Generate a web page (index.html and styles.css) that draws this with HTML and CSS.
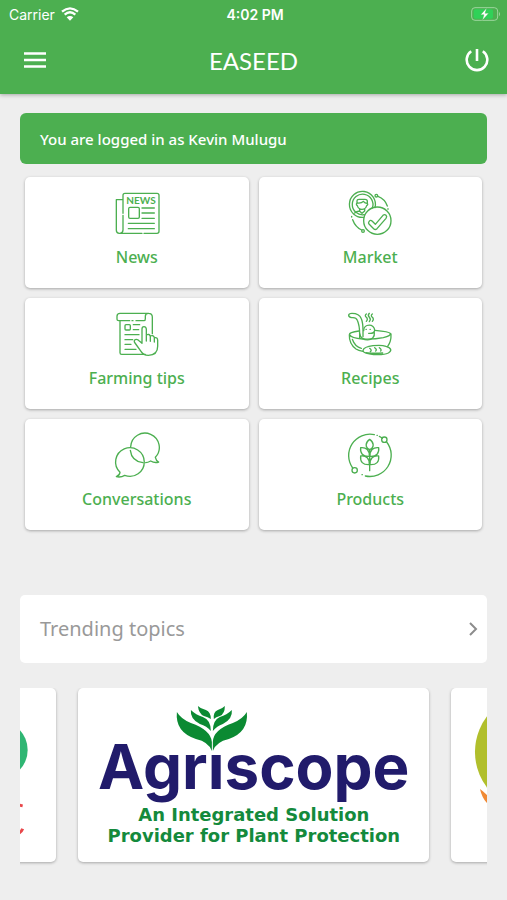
FILE: index.html
```html
<!DOCTYPE html>
<html lang="en">
<head>
<meta charset="utf-8">
<meta name="viewport" content="width=device-width, initial-scale=1">
<title>EASEED</title>
<link rel="stylesheet" href="styles.css">
</head>
<body>
<header class="header">
  <div class="status">
    <div class="carrier">
      <span>Carrier</span>
      <svg class="wifi" viewBox="0 0 54 42" aria-hidden="true"><path d="M3 14Q27-6 51 14M11 23Q27 9 43 23" fill="none" stroke="#fff" stroke-width="7"/><path d="M17 31Q27 23 37 31L27 41Z" fill="#fff"/></svg>
    </div>
    <span class="clock">4:02 PM</span>
    <svg class="battery" viewBox="0 0 90 42" aria-hidden="true"><rect x="2" y="2" width="78" height="38" rx="10" fill="none" stroke="#9cd59e" stroke-width="3"/><path d="M84 14q6 7 0 14z" fill="#9cd59e"/><rect x="8" y="7" width="58" height="28" rx="5" fill="#30d158"/><path d="M47 3 29 23H39L34 40 53 19H42Z" fill="#fff" stroke="#4caf50" stroke-width="1"/></svg>
  </div>
  <nav class="nav">
    <button class="icon-button menu" type="button" aria-label="Menu"><svg viewBox="0 0 24 24"><path d="M1 4.500h22M1 11h22M1 17.500h22" fill="none" stroke="#fff" stroke-width="2.600"/></svg></button>
    <h1 class="title">EASEED</h1>
    <button class="icon-button power" type="button" aria-label="Log out"><svg viewBox="0 0 24 24"><path d="M12 0v12M6.200 2.300A10.300 10.300 0 1 0 17.800 2.300" fill="none" stroke="#fff" stroke-width="2.600"/></svg></button>
  </nav>
</header>

<main class="main">
  <p class="banner">You are logged in as Kevin Mulugu</p>

  <div class="tiles">
    <a class="tile" href="#news">
      <svg class="tile-icon" viewBox="39 30 144 144" aria-hidden="true"><path d="M69 100V46q0-6 6-6H171q6 0 6 6V154q0 6-6 6H132M126 160H58q-9 0-9-9V59H67M69 106V150q0 9-9 10"/><rect x="86" y="82" width="32" height="33" rx="4"/><path d="M126 84H163M126 99H163M126 115H163M85 130H163M85 146H163"/><text class="icon-text" x="123" y="72">NEWS</text></svg>
      <span>News</span>
    </a>
    <a class="tile" href="#market">
      <svg class="tile-icon" viewBox="36 30 144 144" aria-hidden="true"><path d="M89 112A39 39 0 1 1 123 83M91 104A31 31 0 1 1 115 84"/><path d="M69 69V62q0-4 6-4H93q7 0 7 6v7M69 69q-4 5 1 8 3 11 14 11t14-11q5-3 2-7M71 69q12 1 17-5 5 6 11 6M77 86v7q-10 1-15 6M84 100l-7-6M84 100l8-7v-7"/><circle cx="130" cy="122" r="41"/><path d="M105 125q4-7 10-1l9 9 23-27q5-4 9 0t0 9l-27 31q-5 5-10 0l-14-14q-3-3 0-7z"/><circle cx="127" cy="47" r="4"/><path d="M132 49q21 8 28 29M162 86v2M53 109v2M56 119q8 22 27 31"/><circle cx="87" cy="153" r="4"/></svg>
      <span>Market</span>
    </a>
    <a class="tile" href="#farming-tips">
      <svg class="tile-icon" viewBox="39 33 144 144" aria-hidden="true"><path d="M146 40H60q-9 0-9 9v9q0 4 5 4H89M96 62h3M108 62H132q4 0 4-6V49q0-9 9-9 12 0 12 11v50M60 63V158q0 5 5 5H136"/><rect x="75" y="74" width="16" height="16" rx="3"/><path d="M100 74H119M100 89H116M75 104H117M75 119H98M75 133H93M75 148H108"/><path d="M126 128V87q0-7 6-7t7 7v36M139 105q9-5 12 4v15M151 108q8-4 12 4v14M163 113q10-2 10 8v18q0 27-28 27-15 0-22-12l-18-25q-5-7 1-10t13 5l7 6"/></svg>
      <span>Farming tips</span>
    </a>
    <a class="tile" href="#recipes">
      <svg class="tile-icon" viewBox="36 33 144 144" aria-hidden="true"><path d="M87 110V92Q87 68 82 56 76 40 54 40q-10 0-10 6t9 7q13-2 17 8 7 16 7 42v10M97 42q-6 5 0 10t0 12M106 40q-6 6 0 12t0 13M115 42q-6 5 0 10t0 12"/><path d="M89 92C89 70 122 70 122 91 121 99 114 101 104 100M96 88h1M108 88h1M121 98C125 126 79 126 77 101"/><path d="M75 93q-31 4-28 11 4 10 39 13 31 2 62-4 24-6 21-13-3-5-46-9M46 104q-1 27 20 43 7 5 21 7M171 102q1 23-10 37M55 118q8 23 27 27"/><path d="M87 151C91 136 140 133 156 139 173 144 174 153 163 159 147 167 86 166 87 151ZM107 145q8 6 2 10M122 143q8 6 3 10M136 143q8 6 4 10M96 158q20 3 50 1"/></svg>
      <span>Recipes</span>
    </a>
    <a class="tile" href="#conversations">
      <svg class="tile-icon" viewBox="39 21 144 144" aria-hidden="true"><path d="M60 142A43 43 0 1 1 74 151Q63 158 49 155 59 151 60 142Z"/><path d="M92 65A43 43 0 1 1 166 97Q168 107 176 111 164 115 152 108 143 113 137 113M129 113Q95 109 91 76"/></svg>
      <span>Conversations</span>
    </a>
    <a class="tile" href="#products">
      <svg class="tile-icon" viewBox="36 21 144 144" aria-hidden="true"><path d="M56 129A64 64 0 0 1 121 29M129 31h1M136 34Q141 36 145 40M158 51A64 64 0 0 1 94 153M84 149h1"/><circle cx="151" cy="44" r="8"/><circle cx="62" cy="136" r="8"/><path d="M107 137V76M107 74C92 67 94 52 107 43 120 52 122 67 107 74ZM106 94C86 95 78 85 80 68 97 66 107 76 106 94ZM108 94C128 95 136 85 134 68 117 66 107 76 108 94ZM106 119C86 120 78 110 80 93 97 91 107 101 106 119ZM108 119C128 120 136 110 134 93 117 91 107 101 108 119Z"/></svg>
      <span>Products</span>
    </a>
  </div>

  <a class="trending" href="#trending">
    <span>Trending topics</span>
    <svg class="chevron" viewBox="0 0 12 16" aria-hidden="true"><path d="M3 2l6 6-6 6" fill="none" stroke="#8c8c8c" stroke-width="2"/></svg>
  </a>

  <div class="carousel">
    <div class="slide">
      <svg viewBox="0 0 352 174" aria-hidden="true"><circle cx="295" cy="62" r="29" fill="#2fb673"/><path d="M314 117l5 1M314 146q4-2 5-5" fill="none" stroke="#e8474a" stroke-width="3"/></svg>
    </div>
    <div class="slide">
      <svg viewBox="0 0 352 174" role="img" aria-label="Agriscope">
        <text class="brand" x="176" y="101">Agriscope</text>
        <path d="M124 44h20v22h-20z" fill="#fff"/>
        <g fill="#0b8a32"><path d="M99 24Q103 31 113 35 133 42 134 54V63Q131 54 118 51 97 44 99 24Z"/><path d="M169 24Q165 31 155 35 135 42 135 54V63Q138 54 151 51 171 44 169 24Z"/><path d="M113 22Q118 27 125 29 133 32 133 43 129 38 122 36 112 31 113 22Z"/><path d="M154 22Q149 27 142 29 135 32 135 43 139 38 145 36 155 31 154 22Z"/><path d="M120 18Q123 21 128 22 133 24 133 31 130 29 126 28 121 26 120 18Z"/><path d="M147 18Q144 21 140 22 135 24 136 31 138 29 142 28 147 26 147 18Z"/></g>
        <text class="tagline" x="176" y="133">An Integrated Solution</text>
        <text class="tagline" x="176" y="154">Provider for Plant Protection</text>
      </svg>
    </div>
    <div class="slide">
      <svg viewBox="0 0 352 174" aria-hidden="true"><circle cx="83" cy="64" r="59" fill="#b1bf2c"/><path d="M29 101q3 2 7 6v8q-5-5-7-14z" fill="#f08a35"/></svg>
    </div>
  </div>
</main>
</body>
</html>
```
FILE: styles.css
```css
* {
  box-sizing: border-box;
}

body {
  margin: 0;
  background: #eee;
  color: #4caf50;
  font-family: "Noto Sans", sans-serif;
}

a {
  color: inherit;
  text-decoration: none;
}

.header {
  background: #4caf50;
  color: #fff;
  box-shadow: 0 1px 4px rgba(0, 0, 0, 0.3);
}

.status {
  display: grid;
  grid-template-columns: 1fr auto 1fr;
  align-items: center;
  height: 28px;
  padding: 0 6px 0 9px;
  font-family: Inter, sans-serif;
  font-size: 14px;
}

.carrier {
  display: flex;
  align-items: center;
  gap: 6px;
}

.wifi {
  width: 18px;
  height: 14px;
}

.clock {
  font-weight: 600;
}

.battery {
  justify-self: end;
  width: 30px;
  height: 14px;
}

.nav {
  display: grid;
  grid-template-columns: 1fr auto 1fr;
  align-items: center;
  height: 66px;
  padding: 0 18px;
}

.icon-button {
  width: 24px;
  height: 24px;
  padding: 0;
  border: 0;
  background: none;
}

.icon-button svg {
  display: block;
  width: 24px;
  height: 24px;
}

.menu {
  margin-left: 5px;
}

.power {
  justify-self: end;
}

.title {
  margin: 0;
  font-family: Lato, sans-serif;
  font-size: 24px;
  font-weight: 400;
  line-height: 32px;
}

.main {
  padding: 19px 20px 32px;
}

.banner {
  margin: 0 0 13px;
  padding: 14px 20px 13px;
  border-radius: 6px;
  background: #4caf50;
  color: #fff;
  font-size: 15px;
  font-weight: 500;
  line-height: 24px;
}

.tiles {
  display: grid;
  grid-template-columns: 1fr 1fr;
  gap: 10px;
  padding: 0 5px;
}

.tile {
  display: flex;
  flex-direction: column;
  align-items: center;
  gap: 7px;
  padding: 13px 8px 19px;
  border-radius: 5px;
  background: #fff;
  box-shadow: 0 1px 3px rgba(0, 0, 0, 0.3);
  font-size: 16px;
  font-weight: 500;
  line-height: 24px;
}

.tile-icon {
  width: 48px;
  height: 48px;
  fill: none;
  stroke: #4caf50;
  stroke-width: 4;
  stroke-linecap: round;
  stroke-linejoin: round;
}

.icon-text {
  fill: #4caf50;
  stroke: none;
  font-family: Lato, sans-serif;
  font-size: 30px;
  font-weight: 700;
  text-anchor: middle;
}

.trending {
  display: flex;
  align-items: center;
  justify-content: space-between;
  margin-top: 65px;
  padding: 20px 8px 20px 20px;
  border-radius: 5px;
  background: #fff;
  color: #999;
  font-size: 20px;
  line-height: 28px;
}

.chevron {
  width: 12px;
  height: 16px;
}

.carousel {
  display: flex;
  justify-content: center;
  gap: 22px;
  margin-top: 25px;
  padding-bottom: 6px;
  overflow: hidden;
}

.slide {
  flex: 0 0 75.300%;
  border-radius: 5px;
  background: #fff;
  box-shadow: 0 1px 3px rgba(0, 0, 0, 0.3);
}

.slide svg {
  display: block;
  width: 100%;
}

.brand {
  fill: #211b6b;
  font-family: Inter, sans-serif;
  font-size: 62px;
  font-weight: 700;
  text-anchor: middle;
}

.tagline {
  fill: #148a3c;
  font-family: "DejaVu Sans", sans-serif;
  font-size: 18px;
  font-weight: 700;
  text-anchor: middle;
}
```
